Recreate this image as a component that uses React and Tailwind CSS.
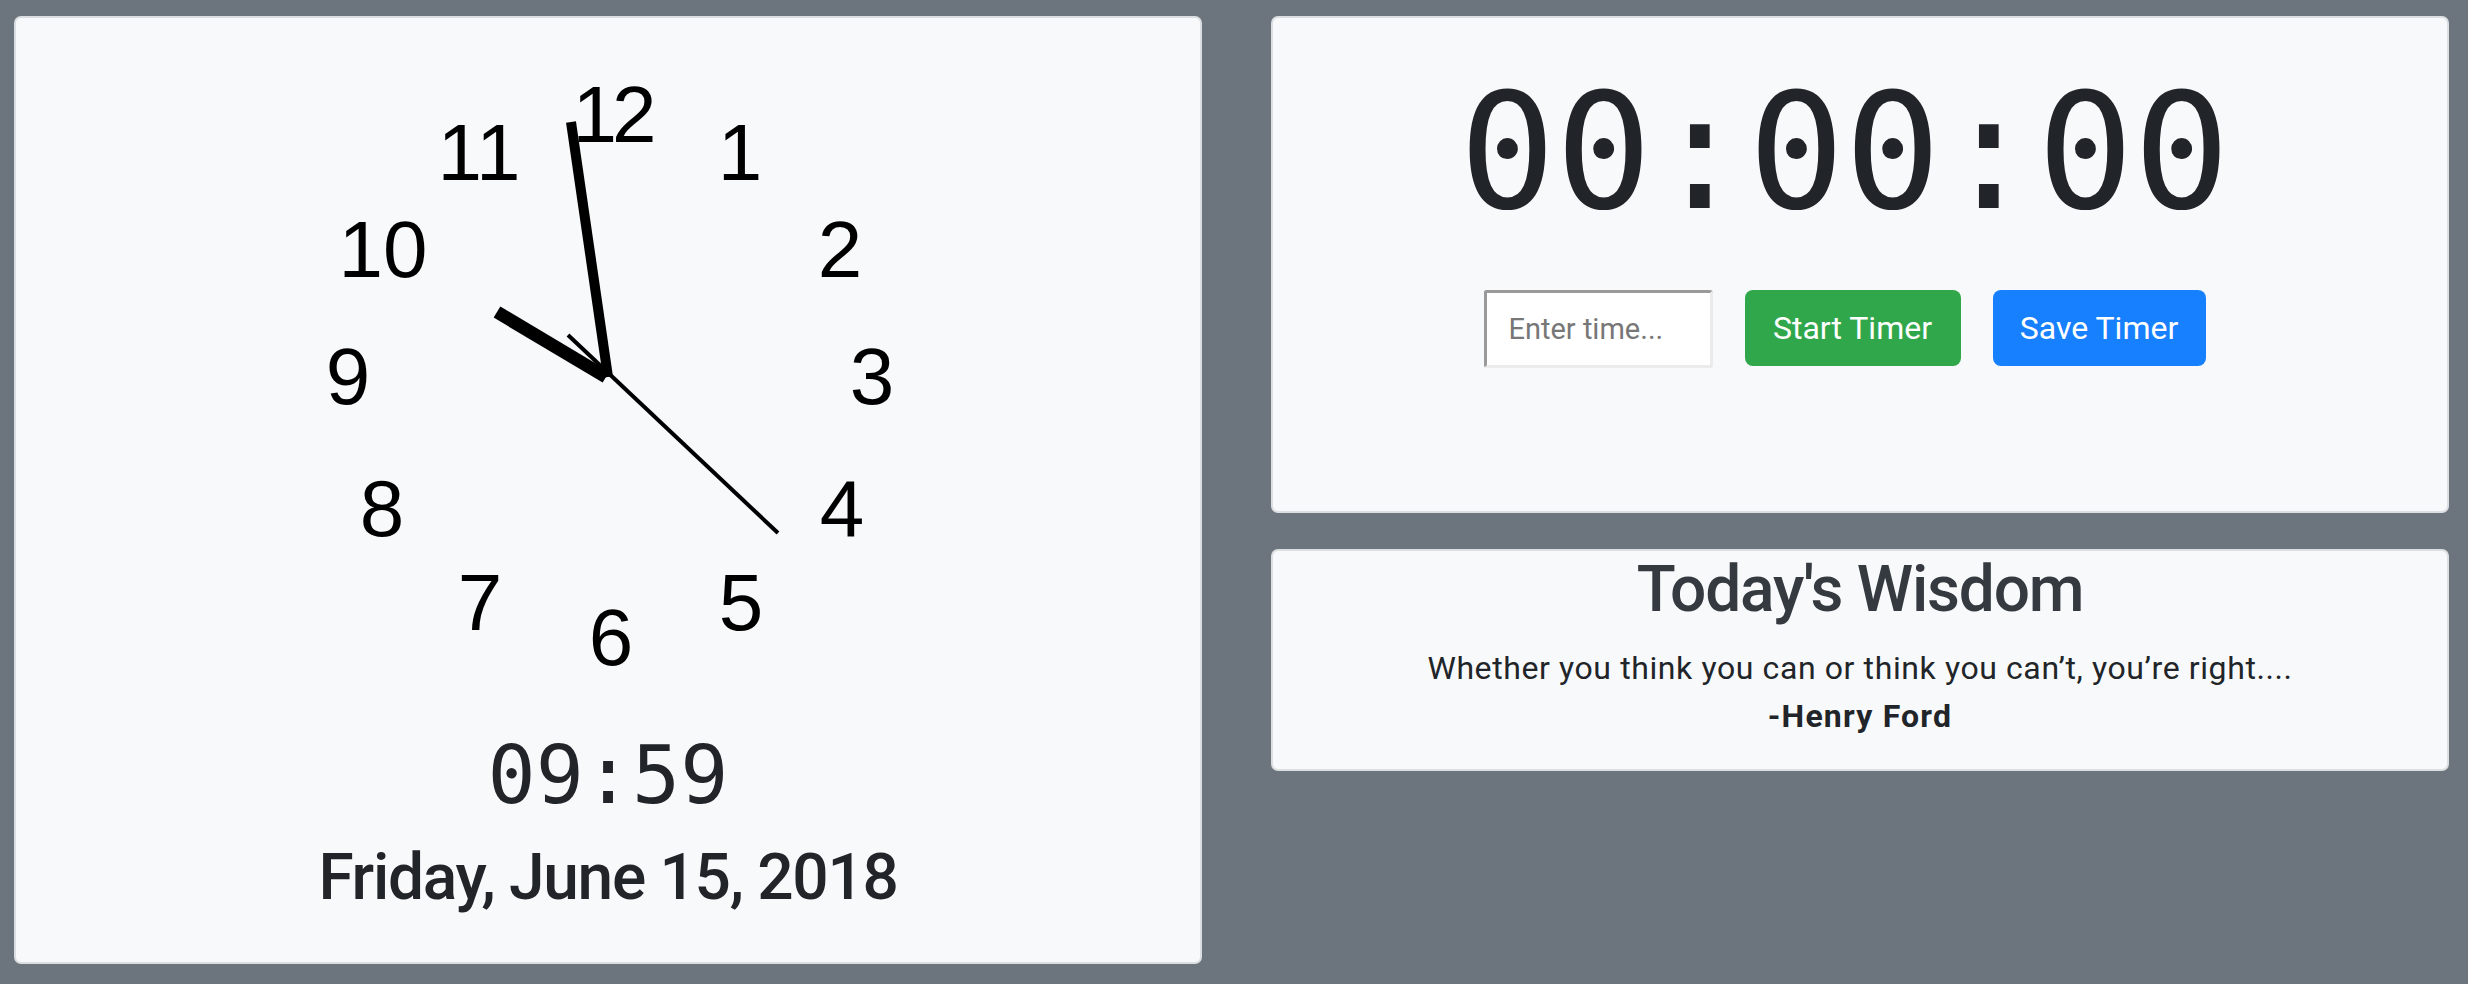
export default function App() {
  const nums = [
    ["12", 612, 113],
    ["1", 740, 151],
    ["2", 840, 248],
    ["3", 872, 375],
    ["4", 842, 507],
    ["5", 741, 601],
    ["6", 611, 636],
    ["7", 480, 601],
    ["8", 382, 507],
    ["9", 348, 375],
    ["10", 383, 248],
    ["11", 479, 151],
  ];
  return (
    <div className="w-[2468px] h-[984px] bg-[#6c757d] flex items-start pt-[16px] pl-[14px] font-['Roboto',sans-serif] text-[#212529] overflow-hidden">
      <div className="w-[1188px] h-[948px] shrink-0 bg-[#f8f9fa] border-2 border-[#dcdfe2] rounded-[7px] flex flex-col items-center">
        <svg width="1184" height="718" viewBox="16 18 1184 718" className="block shrink-0">
          {nums.map(([t, x, y]) => (
            <text
              key={t}
              x={x}
              y={y + 28.5}
              textAnchor="middle"
              fontFamily="'Liberation Sans', Arial, sans-serif"
              fontSize="80"
              letterSpacing={t === "12" ? -5 : 0}
              fill="#000"
            >
              {t}
            </text>
          ))}
          <line x1="568" y1="335" x2="778" y2="533" stroke="#000" strokeWidth="4" />
          <line x1="608" y1="377" x2="571" y2="122" stroke="#000" strokeWidth="10" />
          <line x1="606" y1="377" x2="497" y2="312" stroke="#000" strokeWidth="13" />
        </svg>
        <div className="font-['DejaVu_Sans_Mono',monospace] text-[80px] leading-[80px] h-[80px]">09:59</div>
        <div className="mt-[23px] text-[64px] leading-[77px] font-medium tracking-[-1.3px]">Friday, June 15, 2018</div>
      </div>

      <div className="ml-[69px] w-[1178px] shrink-0 flex flex-col gap-[36px]">
        <div className="h-[497px] bg-[#f8f9fa] border-2 border-[#dcdfe2] rounded-[7px] flex flex-col items-center pr-[31px]">
          <div className="mt-[55px] font-['DejaVu_Sans_Mono',monospace] text-[160px] leading-[160px] h-[160px]">00:00:00</div>
          <div className="mt-[57px] flex items-start gap-[32px]">
            <input
              placeholder="Enter time..."
              className="w-[229px] h-[78px] bg-white border-[3px] border-t-[#9a9a9a] border-l-[#9a9a9a] border-r-[#ebebeb] border-b-[#ebebeb] rounded-[3px] pl-[22px] text-[29px] placeholder:text-[#777777] outline-none"
            />
            <button className="w-[216px] h-[76px] rounded-[8px] bg-[#31a74c] text-white text-[32px] leading-none">
              Start Timer
            </button>
            <button className="w-[213px] h-[76px] rounded-[8px] bg-[#1780fe] text-white text-[32px] leading-none">
              Save Timer
            </button>
          </div>
        </div>
        <div className="h-[222px] bg-[#f8f9fa] border-2 border-[#dcdfe2] rounded-[7px] flex flex-col items-center">
          <h2 className="text-[64px] leading-[77px] font-medium tracking-[-1.2px] text-[#343a40] mb-[16px]">Today's Wisdom</h2>
          <p className="text-[32px] leading-[48px] text-center tracking-[0.6px]">
            Whether you think you can or think you can’t, you’re right....
            <br />
            <strong className="font-bold tracking-[1.2px]">-Henry Ford</strong>
          </p>
        </div>
      </div>
    </div>
  );
}
